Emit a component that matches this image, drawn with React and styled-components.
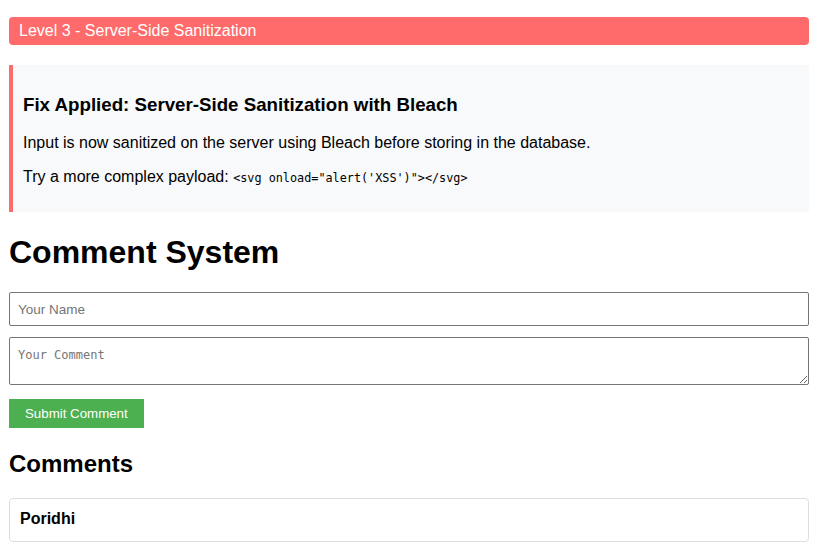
import React, { useState } from 'react'
import styled, { createGlobalStyle } from 'styled-components'

const Global = createGlobalStyle`
body{
  margin:0;
  padding:8px 0;
  font-family:"Liberation Sans", Arial, sans-serif;
  background:#fff;
  color:#000;
}
`

const Pagina = styled.div`
max-width:800px;
margin:0 auto;
padding-top:9px;
`

const Banner = styled.div`
background-color:#ff6b6b;
color:#fff;
font-size:16px;
line-height:18px;
padding:5px 10px;
border-radius:4px;
margin-bottom:20px;
`

const InfoBox = styled.div`
background-color:#f8f9fa;
border-left:4px solid #ff6b6b;
padding:10px 10px;
`

const H3 = styled.h3`
font-size:18.72px;
margin:18.72px 0;
`

const P = styled.p`
font-size:16px;
margin:16px 0;
`

const Code = styled.code`
font-family:"DejaVu Sans Mono", monospace;
font-size:11.8px;
`

const H1 = styled.h1`
font-size:32px;
margin:21.44px 0;
`

const Input = styled.input`
display:block;
box-sizing:border-box;
width:100%;
height:34px;
padding:8px;
font-family:"Liberation Sans", Arial, sans-serif;
font-size:13.5px;
border:1px solid #767676;
border-radius:2px;
margin:0 0 11px;
`

const TextArea = styled.textarea`
display:block;
box-sizing:border-box;
width:100%;
height:48px;
padding:10px 8px 6px;
font-family:"DejaVu Sans Mono", monospace;
font-size:12px;
border:1px solid #767676;
border-radius:2px;
margin:0 0 14px;
`

const Button = styled.button`
display:block;
background-color:#4caf50;
color:#fff;
border:none;
font-family:"Liberation Sans", Arial, sans-serif;
font-size:13.3px;
line-height:17px;
padding:6px 16px;
cursor:pointer;
`

const H2 = styled.h2`
font-size:24px;
margin:22px 0 20px;
`

const Card = styled.div`
border:1px solid #ddd;
border-radius:4px;
padding:10px;
`

const Name = styled.strong`
display:block;
font-size:16px;
line-height:20px;
margin-bottom:2px;
`

function App() {
  const [name, setName] = useState("")
  const [comment, setComment] = useState("")

  return (
    <Pagina>
      <Global />
      <Banner>Level 3 - Server-Side Sanitization</Banner>
      <InfoBox>
        <H3>Fix Applied: Server-Side Sanitization with Bleach</H3>
        <P>Input is now sanitized on the server using Bleach before storing in the database.</P>
        <P>Try a more complex payload: <Code>{`<svg onload="alert('XSS')"></svg>`}</Code></P>
      </InfoBox>
      <H1>Comment System</H1>
      <Input placeholder="Your Name" value={name} onChange={(e) => setName(e.target.value)} />
      <TextArea placeholder="Your Comment" value={comment} onChange={(e) => setComment(e.target.value)} />
      <Button>Submit Comment</Button>
      <H2>Comments</H2>
      <Card>
        <Name>Poridhi</Name>
        <div></div>
      </Card>
    </Pagina>
  )
}

export default App
